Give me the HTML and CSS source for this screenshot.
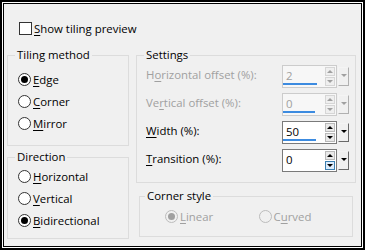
FILE: index.html
```html
<!DOCTYPE html>
<html lang="en">
<head>
    <meta charset="UTF-8">
    <title>Tiling</title>
    <link rel="stylesheet" href="styles.css">
</head>
<body>
    <div class="frame">
        <div class="dialog">
            <div class="check-row">
                <span class="checkbox"></span>
                <span class="label"><u>S</u>how tiling preview</span>
            </div>

            <div class="columns">
                <div class="col-left">
                    <fieldset class="group tiling">
                        <legend>Tiling method</legend>
                        <div class="radio-row"><span class="radio checked"></span><span class="label"><u>E</u>dge</span></div>
                        <div class="radio-row"><span class="radio"></span><span class="label"><u>C</u>orner</span></div>
                        <div class="radio-row"><span class="radio"></span><span class="label"><u>M</u>irror</span></div>
                    </fieldset>
                    <fieldset class="group direction">
                        <legend>Direction</legend>
                        <div class="radio-row"><span class="radio"></span><span class="label"><u>H</u>orizontal</span></div>
                        <div class="radio-row"><span class="radio"></span><span class="label"><u>V</u>ertical</span></div>
                        <div class="radio-row"><span class="radio checked"></span><span class="label"><u>B</u>idirectional</span></div>
                    </fieldset>
                </div>

                <div class="col-right">
                    <fieldset class="group settings">
                        <legend>Settings</legend>
                        <div class="field-row disabled">
                            <span class="field-label">H<u>o</u>rizontal offset (%):</span>
                            <div class="spin">
                                <div class="spin-field">
                                    <div class="spin-text"><span class="spin-value">2</span><span class="spin-bar" style="width:34px"></span></div>
                                    <div class="spin-arrows"><span class="arr up"></span><span class="arr down"></span></div>
                                </div>
                                <span class="spin-drop"></span>
                            </div>
                        </div>
                        <div class="field-row disabled">
                            <span class="field-label">Ve<u>r</u>tical offset (%):</span>
                            <div class="spin">
                                <div class="spin-field">
                                    <div class="spin-text"><span class="spin-value">0</span><span class="spin-bar" style="width:32px"></span></div>
                                    <div class="spin-arrows"><span class="arr up"></span><span class="arr down"></span></div>
                                </div>
                                <span class="spin-drop"></span>
                            </div>
                        </div>
                        <div class="field-row">
                            <span class="field-label"><u>W</u>idth (%):</span>
                            <div class="spin">
                                <div class="spin-field">
                                    <div class="spin-text"><span class="spin-value">50</span><span class="spin-bar" style="width:33px"></span></div>
                                    <div class="spin-arrows"><span class="arr up"></span><span class="arr down"></span></div>
                                </div>
                                <span class="spin-drop"></span>
                            </div>
                        </div>
                        <div class="field-row">
                            <span class="field-label"><u>T</u>ransition (%):</span>
                            <div class="spin">
                                <div class="spin-field">
                                    <div class="spin-text"><span class="spin-value">0</span><span class="spin-bar" style="width:0"></span></div>
                                    <div class="spin-arrows"><span class="arr up"></span><span class="arr down hover"></span></div>
                                </div>
                                <span class="spin-drop"></span>
                            </div>
                        </div>
                    </fieldset>

                    <fieldset class="group corner">
                        <legend>Corner style</legend>
                        <div class="corner-row">
                            <div class="radio-item disabled"><span class="radio checked"></span><span class="label"><u>L</u>inear</span></div>
                            <div class="radio-item disabled"><span class="radio"></span><span class="label">C<u>u</u>rved</span></div>
                        </div>
                    </fieldset>
                </div>
            </div>
        </div>
    </div>
</body>
</html>
```

FILE: styles.css
```css
body {
    margin: 0;
    font-family: "Open Sans", "Noto Sans", sans-serif;
    font-size: 11.4px;
    color: #000;
}
u {
    text-decoration-thickness: 1px;
    text-underline-offset: 2px;
}
.frame {
    width: 365px;
    height: 250px;
    box-sizing: border-box;
    border: 2px solid #000;
    padding: 1px;
    background: #fff;
}
.dialog {
    height: 100%;
    box-sizing: border-box;
    border: 1px solid #000;
    background: #f0f0f0;
}

/* checkbox row */
.check-row {
    display: flex;
    align-items: center;
    padding: 18px 0 0 15px;
    height: 13px;
}
.checkbox {
    width: 13px;
    height: 13px;
    box-sizing: border-box;
    border: 1px solid #333;
    background: #fff;
    margin-right: 2px;
}

.columns {
    display: flex;
    gap: 7px;
    margin-top: 13px;
    padding-left: 3px;
}
.col-left {
    width: 122px;
}
.col-right {
    width: 220px;
}

/* group boxes */
.group {
    margin: 0;
    padding: 0;
    border: 1px solid #dcdcdc;
    min-width: 0;
}
.group legend {
    padding: 0 2px;
    margin-left: 7px;
    line-height: 14px;
}
.tiling {
    padding: 6px 0 11px 0;
}
.direction {
    margin-top: 4px;
    padding: 1px 0 7px 0;
}
.settings {
    padding: 3px 6px 10px 0;
}
.corner {
    margin: 6px 3px 0 3px;
    padding: 2px 0 9px 0;
}
.corner legend {
    margin-left: 5px;
}

.radio-row {
    display: flex;
    align-items: center;
    height: 22px;
    padding-left: 10px;
}
.radio {
    width: 13px;
    height: 13px;
    box-sizing: border-box;
    border: 1px solid #333;
    border-radius: 50%;
    background: #fff;
    display: flex;
    align-items: center;
    justify-content: center;
    margin-right: 2px;
}
.radio.checked::after {
    content: "";
    width: 7px;
    height: 7px;
    border-radius: 50%;
    background: #000;
}

/* settings rows */
.field-row {
    display: flex;
    align-items: center;
    justify-content: space-between;
    height: 23px;
    margin-bottom: 5px;
    padding-left: 9px;
}
.field-row:last-child {
    margin-bottom: 0;
}
.field-label {
    padding-bottom: 4px;
}
.disabled {
    color: #a0a0a0;
}
.spin {
    display: flex;
    align-items: center;
    width: 67px;
    height: 23px;
}
.spin-field {
    display: flex;
    width: 55px;
    height: 23px;
    box-sizing: border-box;
    border: 1px solid #7a7a7a;
    background: #fff;
}
.disabled .spin-field {
    border-color: #cccccc;
    background: #f7f7f7;
}
.spin-text {
    flex: 1;
    display: flex;
    flex-direction: column;
    justify-content: space-between;
    padding: 2px 0 2px 0;
}
.spin-value {
    padding-left: 3px;
    line-height: 15px;
}
.spin-bar {
    display: block;
    height: 2px;
    background: #3c8be0;
}
.spin-arrows {
    display: flex;
    flex-direction: column;
    gap: 1px;
    padding: 1px 0;
    width: 10px;
    margin-right: 1px;
}
.arr {
    height: 9px;
    box-sizing: border-box;
    border: 1px solid #b9b9b9;
    background: #e9e9e9;
    display: flex;
    align-items: center;
    justify-content: center;
}
.arr::after {
    content: "";
    border-left: 3px solid transparent;
    border-right: 3px solid transparent;
}
.arr.up::after {
    border-bottom: 3px solid #000;
}
.arr.down::after {
    border-top: 3px solid #000;
}
.arr.hover {
    border-color: #3c7fb1;
    background: #dcecfc;
}
.disabled .arr {
    border-color: #d6d6d6;
    background: #efefef;
}
.disabled .arr.up::after {
    border-bottom-color: #a0a0a0;
}
.disabled .arr.down::after {
    border-top-color: #a0a0a0;
}
.spin-drop {
    width: 11px;
    height: 19px;
    margin-left: 1px;
    box-sizing: border-box;
    border: 1px solid;
    border-color: #f4f4f4 #6a6a6a #6a6a6a #f4f4f4;
    background: #f0f0f0;
    display: flex;
    justify-content: center;
    padding-top: 6px;
}
.spin-drop::after {
    content: "";
    height: 0;
    border-left: 3px solid transparent;
    border-right: 3px solid transparent;
    border-top: 3px solid #000;
}
.disabled .spin-drop {
    border-color: #f4f4f4 #b0b0b0 #b0b0b0 #f4f4f4;
}
.disabled .spin-drop::after {
    border-top-color: #a0a0a0;
}

/* corner style */
.corner-row {
    display: flex;
    height: 22px;
    align-items: center;
    padding-left: 25px;
}
.radio-item {
    display: flex;
    align-items: center;
    width: 100px;
}
.radio-item.disabled .radio {
    border-color: #bcbcbc;
    background: #f0f0f0;
}
.radio-item.disabled .radio.checked::after {
    background: #a0a0a0;
}
```
